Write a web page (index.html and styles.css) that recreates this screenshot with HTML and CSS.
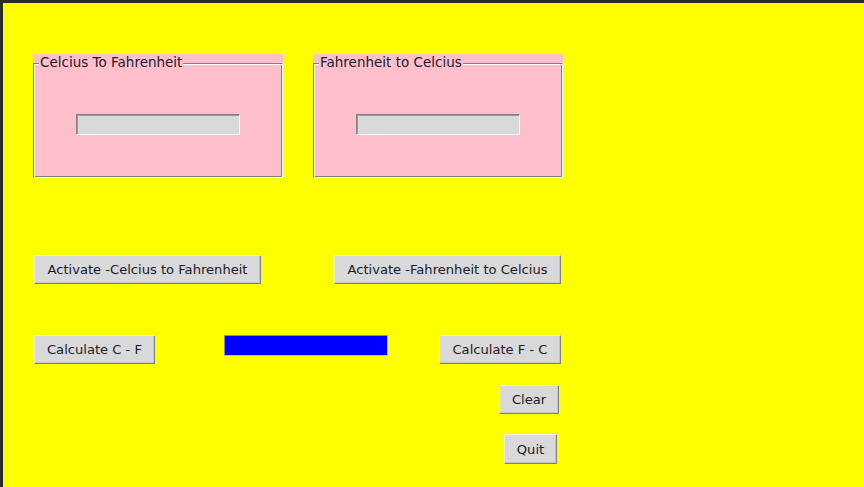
FILE: index.html
```html
<!DOCTYPE html>
<html>
<head>
<meta charset="utf-8">
<link rel="stylesheet" href="styles.css">
</head>
<body>
<div class="window">
  <div class="app">
    <div class="row row-frames">
      <fieldset class="labelframe">
        <legend>Celcius To Fahrenheit</legend>
        <input class="entry" type="text">
      </fieldset>
      <fieldset class="labelframe">
        <legend>Fahrenheit to Celcius</legend>
        <input class="entry" type="text">
      </fieldset>
    </div>
    <div class="row row-activate">
      <button class="btn btn-act1">Activate -Celcius to Fahrenheit</button>
      <button class="btn btn-act2">Activate -Fahrenheit to Celcius</button>
    </div>
    <div class="row row-calc">
      <button class="btn btn-cf">Calculate C - F</button>
      <input class="entry entry-blue" type="text">
      <button class="btn btn-fc">Calculate F - C</button>
    </div>
    <div class="row row-clear">
      <button class="btn btn-clear">Clear</button>
    </div>
    <div class="row row-quit">
      <button class="btn btn-quit">Quit</button>
    </div>
  </div>
</div>
</body>
</html>
```
FILE: styles.css
```css
html, body {
  margin: 0;
  padding: 0;
  width: 864px;
  height: 487px;
  overflow: hidden;
}
body {
  background: #2b2b2b;
  font-family: "DejaVu Sans", sans-serif;
  font-size: 13.5px;
  color: #000;
}
.window {
  padding: 3px 0 0 3px;
  height: 484px;
}
.app {
  background: #ffff00;
  height: 484px;
  padding-left: 30px;
  display: flex;
  flex-direction: column;
  align-items: flex-start;
}
.row {
  display: flex;
  align-items: flex-start;
}
.row-frames {
  margin-top: 51px;
  gap: 30px;
}
.labelframe {
  position: relative;
  box-sizing: border-box;
  width: 250px;
  height: 124px;
  margin: 0;
  padding: 0;
  border: none;
  background: #ffc0cb;
  display: flex;
  justify-content: center;
}
.labelframe::before {
  content: "";
  position: absolute;
  left: 0;
  top: 9px;
  width: 248px;
  height: 113px;
  border-top: 1px solid #808080;
  border-left: 1px solid #808080;
  border-right: 1px solid #ffffff;
  border-bottom: 1px solid #ffffff;
  box-shadow: inset 1px 1px 0 #ffffff, inset -1px -1px 0 #808080;
}
.labelframe legend {
  position: absolute;
  left: 6px;
  top: 0;
  padding: 0 1px;
  margin: 0;
  line-height: 17px;
  background: #ffc0cb;
  z-index: 1;
  color: #1a1a2a;
}
.entry {
  box-sizing: border-box;
  width: 164px;
  height: 21px;
  margin: 0;
  padding: 0;
  background: #d9d9d9;
  border-top: 1px solid #808080;
  border-left: 1px solid #808080;
  border-right: 1px solid #ffffff;
  border-bottom: 1px solid #ffffff;
  box-shadow: inset 1px 1px 0 #9a9a9a;
  outline: none;
}
.labelframe .entry {
  margin-top: 60px;
}
.btn {
  box-sizing: border-box;
  height: 29px;
  margin: 0;
  padding: 0;
  background: #d9d9d9;
  font-family: "DejaVu Sans", sans-serif;
  font-size: 13.1px;
  color: #1a1a2a;
  border-top: 1px solid #ffffff;
  border-left: 1px solid #ffffff;
  border-right: 1px solid #808080;
  border-bottom: 1px solid #808080;
  box-shadow: inset -1px -1px 0 #c4c4c4;
  text-align: center;
}
.row-activate {
  margin-top: 77px;
  margin-left: 1px;
  gap: 73px;
}
.btn-act1, .btn-act2 { width: 227px; }
.row-calc {
  margin-top: 51px;
  margin-left: 1px;
}
.btn-cf { width: 121px; }
.entry-blue {
  margin: 0 0 0 69px;
  background: #0000ff;
  border-top: 1px solid #8080ff;
  border-left: 1px solid #8080ff;
  border-right: 1px solid #b0b0ff;
  border-bottom: 1px solid #b0b0ff;
  box-shadow: none;
}
.btn-fc { width: 122px; margin-left: 51px; }
.row-clear {
  margin-top: 21px;
  margin-left: 466px;
}
.btn-clear { width: 60px; }
.row-quit {
  margin-top: 20px;
  margin-left: 471px;
}
.btn-quit { width: 53px; height: 30px; }
```
